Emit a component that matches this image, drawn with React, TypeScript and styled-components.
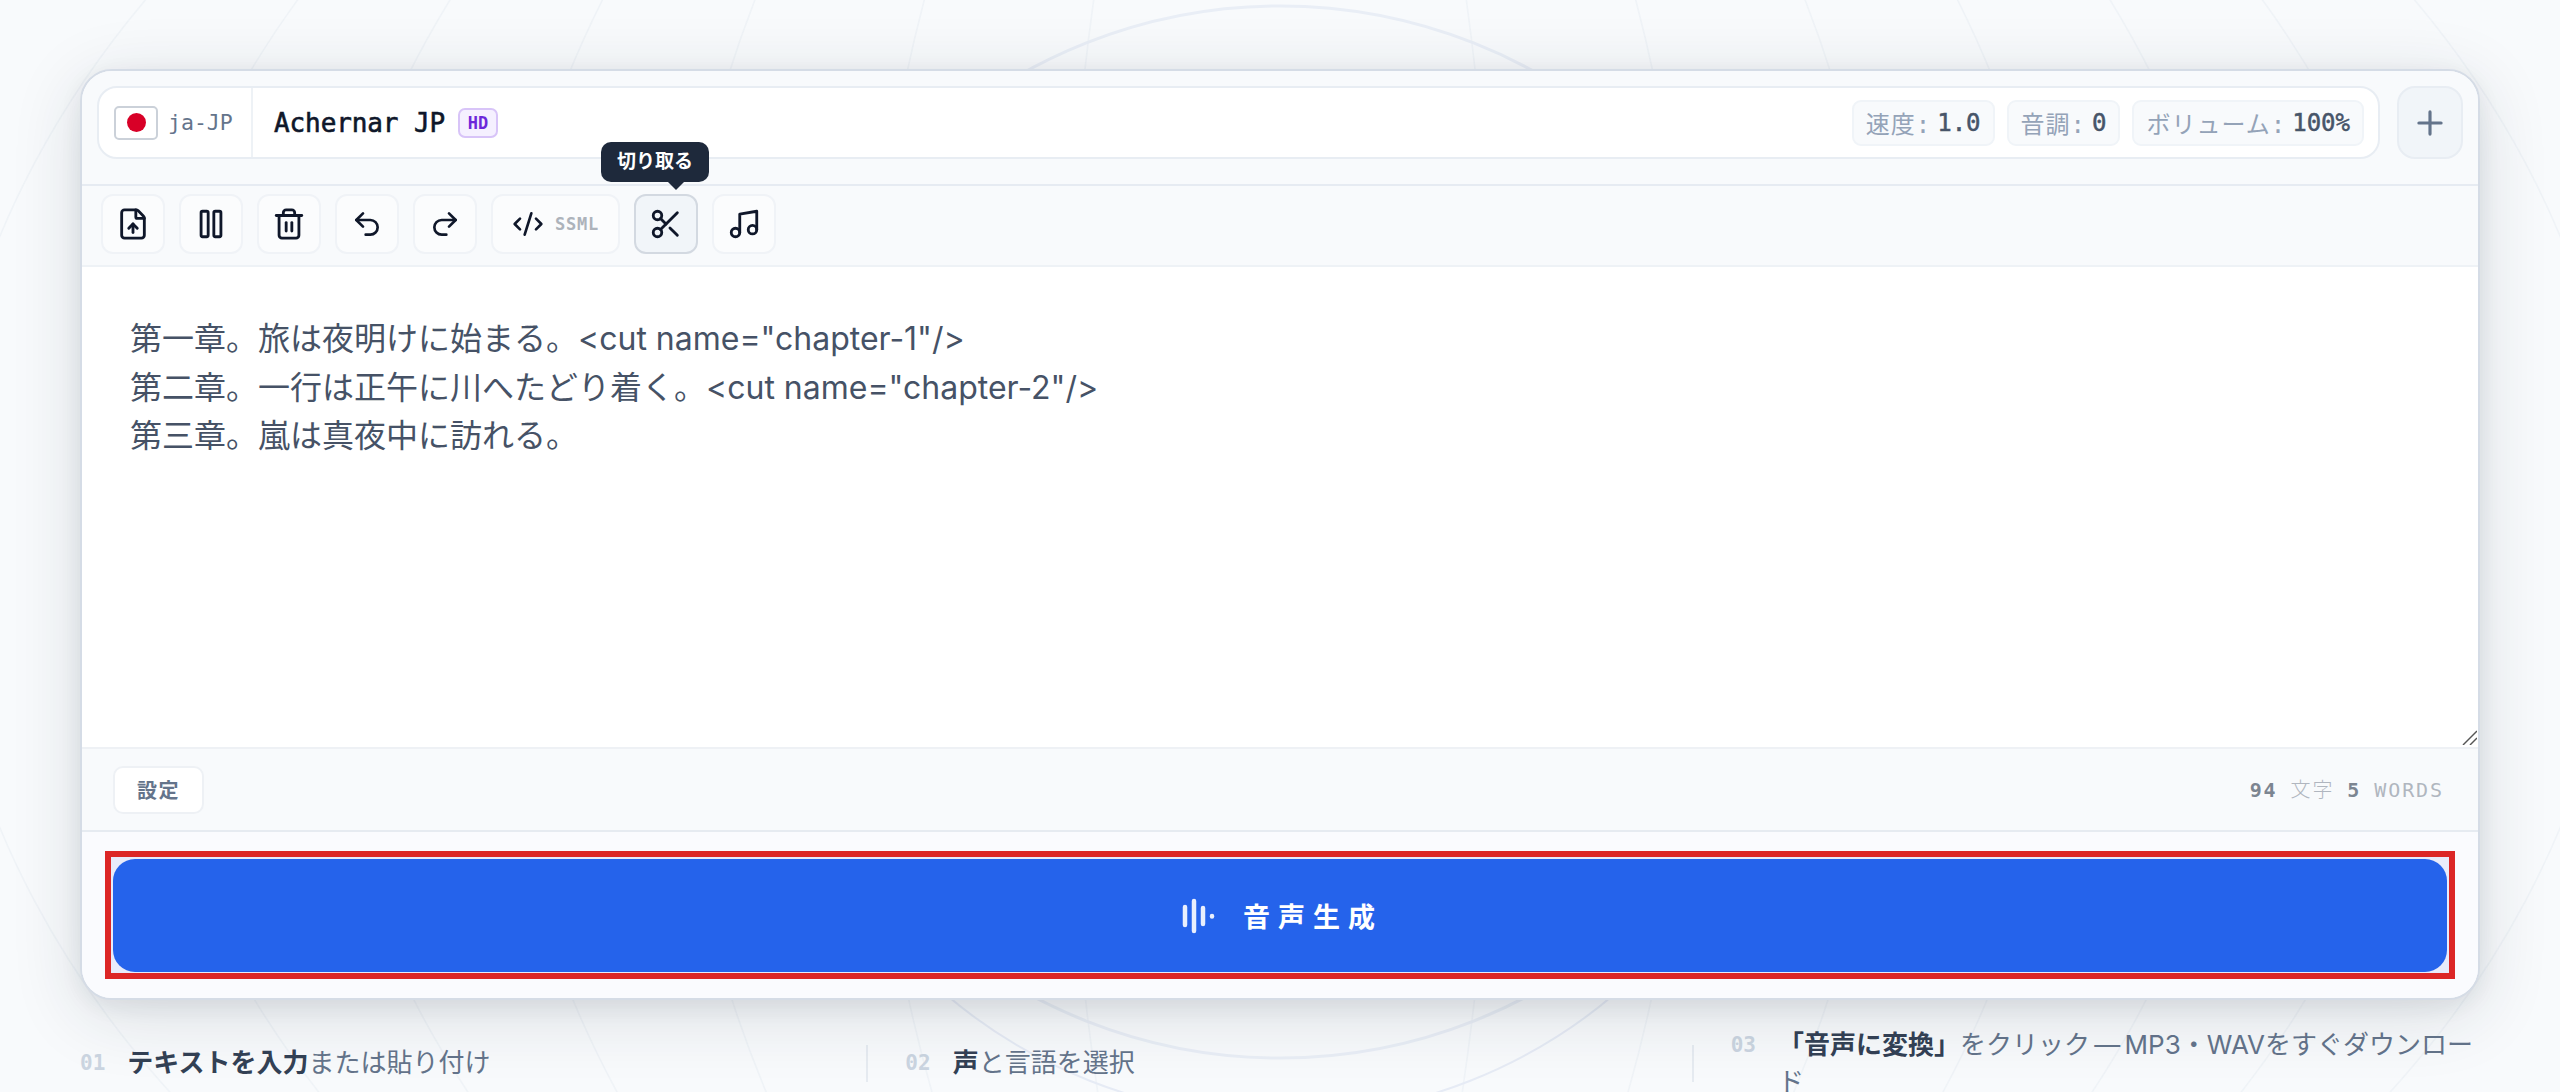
import React from "react";
import styled, { createGlobalStyle } from "styled-components";
import { CodeXml, FileUp, Music, Pause, Plus, Redo2, Scissors, Trash2, Undo2 } from "lucide-react";

const SANS = `Inter, "Noto Sans CJK JP", sans-serif`;
const MONO = `"DejaVu Sans Mono", "Noto Sans CJK JP", monospace`;

const GlobalStyle = createGlobalStyle`
  * {
    box-sizing: border-box;
  }

  html,
  body {
    margin: 0;
    height: 100%;
    overflow: hidden;
    background: #f8fafc;
    font-family: ${SANS};
  }
`;

const Backdrop = styled.svg`
  position: absolute;
  inset: 0;
  pointer-events: none;
`;

const Page = styled.main`
  position: relative;
  padding: 69px 80px 0;
`;

const Card = styled.section`
  position: relative;
  display: flex;
  flex-direction: column;
  border: 2px solid #d5dce6;
  border-radius: 32px;
  background: #fafbfd;
  box-shadow: 0 6px 22px rgba(30, 41, 59, 0.07), 0 14px 70px rgba(30, 41, 59, 0.14);
`;

const Header = styled.header`
  display: flex;
  align-items: flex-start;
  gap: 17px;
  height: 115px;
  padding: 15px 15px 0;
  border-bottom: 2px solid #e6ebf2;
  background: #f8fafc;
  border-radius: 30px 30px 0 0;
`;

const VoiceBox = styled.div`
  flex: 1;
  display: flex;
  align-items: stretch;
  height: 73px;
  border: 2px solid #e8edf3;
  border-radius: 20px;
  background: #fff;
`;

const LocaleCell = styled.div`
  display: flex;
  align-items: center;
  gap: 10px;
  width: 154px;
  padding-left: 15px;
  border-right: 2px solid #eef2f6;
`;

const Flag = styled.span`
  display: flex;
  align-items: center;
  justify-content: center;
  width: 44px;
  height: 34px;
  border: 2px solid #cbd1d9;
  border-radius: 5px;
  background: #fff;

  &::after {
    content: "";
    width: 19px;
    height: 19px;
    border-radius: 50%;
    background: #d80027;
  }
`;

const Locale = styled.span`
  font: 400 21.5px ${MONO};
  color: #64748b;
`;

const VoiceCell = styled.div`
  flex: 1;
  display: flex;
  align-items: center;
  gap: 13px;
  padding: 0 14px 0 21px;
`;

const VoiceName = styled.span`
  font: 400 26px ${MONO};
  letter-spacing: -0.1px;
  color: #0f172a;
  -webkit-text-stroke: 0.6px #0f172a;
`;

const Badge = styled.span`
  display: flex;
  align-items: center;
  justify-content: center;
  width: 40px;
  height: 30px;
  border: 2px solid #d8c4f8;
  border-radius: 7px;
  background: #f5f0ff;
  font: 700 17px ${MONO};
  color: #6d28d9;
`;

const Pills = styled.div`
  display: flex;
  gap: 12px;
  margin-left: auto;
`;

const Pill = styled.span`
  display: flex;
  align-items: center;
  gap: 6px;
  height: 46px;
  padding: 0 12px;
  border: 2px solid #f0f4f8;
  border-radius: 9px;
  background: #f8fafc;
  font: 400 24px ${MONO};
  letter-spacing: 1px;
  color: #94a3b8;
`;

const PillValue = styled.b`
  font: 400 24px ${MONO};
  letter-spacing: 0;
  color: #475569;
  -webkit-text-stroke: 0.5px #475569;
`;

const AddButton = styled.button`
  display: flex;
  align-items: center;
  justify-content: center;
  width: 66px;
  height: 73px;
  padding: 0;
  border: 2px solid #e8edf3;
  border-radius: 18px;
  background: #f1f5f9;
  color: #64748b;
`;

const Toolbar = styled.div`
  display: flex;
  align-items: flex-start;
  gap: 14px;
  height: 81px;
  padding: 8px 0 0 19px;
  border-bottom: 2px solid #eef2f6;
  background: #f8fafc;
`;

const ToolButton = styled.button<{ $active?: boolean; $wide?: boolean }>`
  position: relative;
  display: flex;
  align-items: center;
  justify-content: center;
  gap: 11px;
  width: ${(p) => (p.$wide ? "129px" : "64px")};
  height: 60px;
  padding: 0;
  border: 2px solid ${(p) => (p.$active ? "#d3d9e1" : "#f0f3f7")};
  border-radius: 12px;
  background: ${(p) => (p.$active ? "#f1f5f9" : "#fbfcfd")};
  color: #0f172a;
`;

const SsmlLabel = styled.span`
  font: 700 17px ${MONO};
  letter-spacing: 0.8px;
  color: #adb3bb;
`;

const Tooltip = styled.span`
  position: absolute;
  left: -35px;
  bottom: 70px;
  width: 108px;
  height: 40px;
  border-radius: 10px;
  background: #1e293b;
  font: 700 19px/40px ${SANS};
  text-align: center;
  color: #fff;

  &::after {
    content: "";
    position: absolute;
    left: 67px;
    top: 100%;
    border: 8px solid transparent;
    border-top-color: #1e293b;
    border-bottom-width: 0;
  }
`;

const EditorWrap = styled.div`
  position: relative;
  height: 480px;
`;

const Editor = styled.textarea`
  display: block;
  width: 100%;
  height: 100%;
  padding: 48px;
  border: 0;
  outline: 0;
  background: #fff;
  font: 400 32px/48.5px ${SANS};
  color: #465266;
  resize: none;
`;

const Grip = styled.svg`
  position: absolute;
  right: 1px;
  bottom: 2px;
`;

const Footer = styled.div`
  display: flex;
  align-items: center;
  justify-content: space-between;
  height: 85px;
  padding: 0 34px 0 31px;
  border-top: 2px solid #eef1f5;
  border-bottom: 2px solid #e6ebf1;
  background: #f8fafc;
`;

const SettingsButton = styled.button`
  width: 91px;
  height: 48px;
  padding: 0;
  border: 2px solid #eef1f5;
  border-radius: 10px;
  background: #fff;
  font: 700 20px ${SANS};
  letter-spacing: 1.6px;
  color: #64748b;
`;

const Counts = styled.div`
  display: flex;
  align-items: center;
  gap: 13px;
  height: 30px;
  font: 400 20px/30px ${MONO};
  letter-spacing: 1.9px;
  color: #b0b6bf;
`;

const Count = styled.b`
  font-weight: 700;
  color: #7c8591;
`;

const CountLabel = styled.span<{ $thin?: boolean }>`
  font-weight: ${(p) => (p.$thin ? 300 : 400)};
`;

const GenerateArea = styled.div`
  height: 166px;
  padding: 19px 23px;
  border-radius: 0 0 30px 30px;
  background: #fafbfe;
`;

/* red marker frame that sits round the button in the picture */
const GenerateFrame = styled.div`
  height: 128px;
  padding: 2px 2px 1px;
  border: 6px solid #dc2626;
  background: #e8ebfa;
`;

const GenerateButton = styled.button`
  display: flex;
  align-items: center;
  justify-content: center;
  gap: 27px;
  width: 100%;
  height: 113px;
  padding: 0 0 0 5px;
  border: 0;
  border-radius: 22px;
  background: #2563eb;
  color: #fff;
  font: 700 27px ${SANS};
  letter-spacing: 8px;
`;

const Steps = styled.ol`
  display: flex;
  align-items: center;
  gap: 37px;
  margin: 27px 0 0;
  padding: 0;
  list-style: none;
`;

const Step = styled.li`
  flex: 1;
  display: flex;
  align-items: flex-start;
  gap: 22px;
  min-width: 0;
  font: 400 26px/36.5px ${SANS};
  word-spacing: -3px;
  color: #64748b;
`;

const StepNumber = styled.span`
  flex: none;
  font: 700 21px/36.5px ${MONO};
  color: #cbd5e1;
`;

const StepStrong = styled.strong`
  font-weight: 700;
  color: #334155;
`;

const StepDivider = styled.span`
  flex: none;
  width: 2px;
  height: 37px;
  background: #e6ebf1;
`;

const MERIDIANS = [220, 420, 620, 800, 980, 1160, 1340];

function WaveIcon() {
  return (
    <svg width="34" height="36" viewBox="0 0 34 36" fill="none" stroke="#fff" strokeWidth="4.5" strokeLinecap="round" opacity="0.9">
      <path d="M3 9v18" />
      <path d="M12 3v30" />
      <path d="M21 10v16" />
      <path d="M30 18v.5" />
    </svg>
  );
}

const EDITOR_TEXT = `第一章。旅は夜明けに始まる。<cut name="chapter-1"/>
第二章。一行は正午に川へたどり着く。<cut name="chapter-2"/>
第三章。嵐は真夜中に訪れる。`;

export default function App() {
  return (
    <>
      <GlobalStyle />
      <Backdrop width="2560" height="1092" viewBox="0 0 2560 1092" fill="none">
        {MERIDIANS.map((rx) => (
          <ellipse key={rx} cx="1280" cy="532" rx={rx} ry="1000" stroke="#e8edf3" strokeWidth="1.5" opacity="0.5" />
        ))}
        <circle cx="1280" cy="532" r="526" stroke="#e9eef6" strokeWidth="3" />
        <circle cx="1280" cy="600" r="517" stroke="#e6ebf5" strokeWidth="2" />
      </Backdrop>
      <Page>
        <Card>
          <Header>
            <VoiceBox>
              <LocaleCell>
                <Flag />
                <Locale>ja-JP</Locale>
              </LocaleCell>
              <VoiceCell>
                <VoiceName>Achernar JP</VoiceName>
                <Badge>HD</Badge>
                <Pills>
                  <Pill>
                    速度:<PillValue>1.0</PillValue>
                  </Pill>
                  <Pill>
                    音調:<PillValue>0</PillValue>
                  </Pill>
                  <Pill>
                    ボリューム:<PillValue>100%</PillValue>
                  </Pill>
                </Pills>
              </VoiceCell>
            </VoiceBox>
            <AddButton aria-label="追加">
              <Plus size={38} strokeWidth={2} />
            </AddButton>
          </Header>

          <Toolbar>
            <ToolButton aria-label="アップロード">
              <FileUp size={34} />
            </ToolButton>
            <ToolButton aria-label="一時停止">
              <Pause size={34} />
            </ToolButton>
            <ToolButton aria-label="削除">
              <Trash2 size={34} />
            </ToolButton>
            <ToolButton aria-label="元に戻す">
              <Undo2 size={32} />
            </ToolButton>
            <ToolButton aria-label="やり直す">
              <Redo2 size={32} />
            </ToolButton>
            <ToolButton $wide>
              <CodeXml size={32} />
              <SsmlLabel>SSML</SsmlLabel>
            </ToolButton>
            <ToolButton $active aria-label="切り取る">
              <Scissors size={34} />
              <Tooltip>切り取る</Tooltip>
            </ToolButton>
            <ToolButton aria-label="音楽">
              <Music size={34} />
            </ToolButton>
          </Toolbar>

          <EditorWrap>
            <Editor readOnly spellCheck={false} defaultValue={EDITOR_TEXT} />
            <Grip width="15" height="15" viewBox="0 0 15 15" fill="none" stroke="#555" strokeWidth="1.4">
              <path d="M15 1 1 15" />
              <path d="M15 8 8 15" />
            </Grip>
          </EditorWrap>

          <Footer>
            <SettingsButton>設定</SettingsButton>
            <Counts>
              <Count>94</Count>
              <CountLabel $thin>文字</CountLabel>
              <Count>5</Count>
              <CountLabel>WORDS</CountLabel>
            </Counts>
          </Footer>

          <GenerateArea>
            <GenerateFrame>
              <GenerateButton>
                <WaveIcon />
                音声生成
              </GenerateButton>
            </GenerateFrame>
          </GenerateArea>
        </Card>

        <Steps>
          <Step>
            <StepNumber>01</StepNumber>
            <span>
              <StepStrong>テキストを入力</StepStrong>または貼り付け
            </span>
          </Step>
          <StepDivider />
          <Step>
            <StepNumber>02</StepNumber>
            <span>
              <StepStrong>声</StepStrong>と言語を選択
            </span>
          </Step>
          <StepDivider />
          <Step>
            <StepNumber>03</StepNumber>
            <span>
              <StepStrong>「音声に変換」</StepStrong>をクリック — MP3・WAVをすぐダウンロード
            </span>
          </Step>
        </Steps>
      </Page>
    </>
  );
}
